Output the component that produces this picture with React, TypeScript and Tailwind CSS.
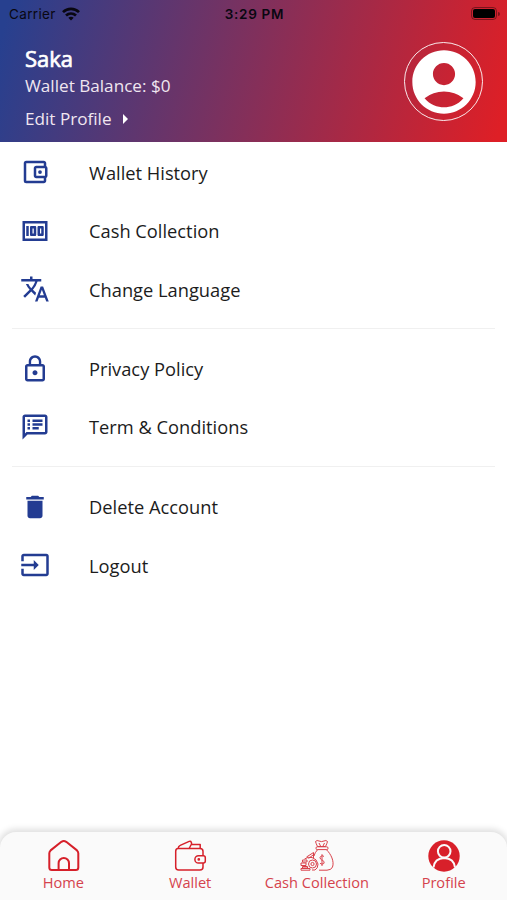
import {
  MdAccountCircle,
  MdArrowRight,
  MdDelete,
  MdInput,
  MdLockOutline,
  MdMoney,
  MdOutlineAccountBalanceWallet,
  MdOutlineSpeakerNotes,
  MdTranslate,
} from "react-icons/md";

const sections = [
  [
    { icon: MdOutlineAccountBalanceWallet, label: "Wallet History" },
    { icon: MdMoney, label: "Cash Collection" },
    { icon: MdTranslate, label: "Change Language" },
  ],
  [
    { icon: MdLockOutline, label: "Privacy Policy" },
    { icon: MdOutlineSpeakerNotes, label: "Term & Conditions" },
  ],
  [
    { icon: MdDelete, label: "Delete Account" },
    { icon: MdInput, label: "Logout" },
  ],
];

const HomeIcon = () => (
  <svg width="34" height="34" viewBox="0 0 34 34" fill="none" stroke="#d6202a" strokeWidth="2" strokeLinejoin="round">
    <path d="M3.3 14.2 Q3.3 12.6 4.6 11.4 L15.4 2.8 Q17.8 1.2 20.2 2.8 L31 11.4 Q32.3 12.6 32.3 14.2 V28.5 Q32.3 31 29.8 31 H5.8 Q3.3 31 3.3 28.5Z" />
    <path d="M12.6 31 V24.2 a5.2 5.2 0 0 1 10.4 0 V31" />
  </svg>
);

const WalletIcon = () => (
  <svg width="34" height="34" viewBox="0 0 34 34" fill="none" stroke="#d6202a" strokeWidth="1.5" strokeLinejoin="round">
    <path d="M30 17 V12.5 Q30 9.5 27 9.5 H5 Q2.7 9.5 2.7 12.5 V28 Q2.7 31 5.7 31 H27 Q30 31 30 28 V24" />
    <path d="M5.2 9.5 Q5.2 7.2 7.2 6.4 L16.2 2.4 Q17.7 1.8 18.3 3.2 L18.7 5.5 M16.2 9.5 L18.2 5.5 H27.2 V9.5" />
    <path d="M30.3 16.8 H25.5 a3.6 3.6 0 0 0 0 7.2 H30.3 Q32.3 24 32.3 22 V18.8 Q32.3 16.8 30.3 16.8Z" />
    <circle cx="25.8" cy="20.4" r=".6" />
  </svg>
);

const CashIcon = () => (
  <svg width="34" height="34" viewBox="0 0 34 34" fill="none" stroke="#d9414a" strokeWidth="1" strokeLinejoin="round">
    <path d="M17.5 7.5 Q16 4.5 15.5 2.5 Q17 .8 19 2 Q21.5 3.2 24 2 Q26 .8 27.5 2.5 Q27 4.5 25.5 7.5Z M19 4 L20.5 7 M24.5 4 L23 7" />
    <rect x="16" y="7.8" width="12" height="2.8" rx="1.2" />
    <path d="M17.5 10.8 Q14.8 13.5 14 17 M26.5 10.8 C31 15 34.5 22.5 32.5 28 Q31.5 31 27 31.2 H19" />
    <path d="M24 17.5 Q22.8 16.3 21.3 17 Q19.2 18.2 20.5 20 Q21.3 21 22.8 21.5 Q25 22.5 23.8 24.5 Q22 26 20 24.3 M22 15.2 V27" />
    <path d="M6.5 18 L13.5 13.5 V19 M8.5 19.5 L13 16 M4.5 20 Q8 17.5 12 18.5 Q17 20 18 25 Q18 29.5 15 31 H12" />
    <circle cx="12.5" cy="25" r="4" />
    <circle cx="12.5" cy="25" r="1.6" />
    <path d="M2.5 21 H7 V23 H2.5Z M1 24 H6 V26.5 H1Z M2.5 27.5 H7.5 V29 H2.5Z M1 29.5 H10 V31.2 H1Z" />
  </svg>
);

const ProfileIcon = () => (
  <svg width="34" height="34" viewBox="0 0 34 34" fill="none">
    <circle cx="17" cy="17" r="15.7" fill="#d8202a" />
    <g stroke="#fafafa" strokeWidth="2">
      <circle cx="17.2" cy="12.3" r="6.3" />
      <path d="M6.5 28.5 Q7.5 19.3 17.2 19 Q27 19.3 28 28.5" />
    </g>
  </svg>
);

const tabs = [
  { icon: HomeIcon, label: "Home" },
  { icon: WalletIcon, label: "Wallet" },
  { icon: CashIcon, label: "Cash Collection" },
  { icon: ProfileIcon, label: "Profile" },
];

function StatusBar() {
  return (
    <div className="grid h-[27px] grid-cols-3 items-center pl-[9px] pr-[7px] font-['Inter',sans-serif] text-[13.5px] text-[#090711]">
      <div className="flex items-center gap-[6px]">
        <span className="pt-px tracking-[0.35px]">Carrier</span>
        <svg width="18" height="14" viewBox="0 0 18 14" fill="none" stroke="#090711" strokeWidth="2.7">
          <path d="M1 5.1 C5.5 .7 12.5 .7 17 5.1" />
          <path d="M4 8.6 C7 5.8 11 5.8 14 8.6" />
          <path d="M9 13.5 L6.3 10.8 Q9 8.7 11.7 10.8Z" fill="#090711" stroke="none" />
        </svg>
      </div>
      <span className="whitespace-nowrap pt-px text-center font-semibold tracking-[0.7px]">3:29 PM</span>
      <div className="flex items-center justify-end gap-px">
        <span className="h-[13px] w-[26px] rounded-[4px] border border-black/40 p-px">
          <span className="block h-full rounded-[2px] bg-black" />
        </span>
        <span className="h-1 w-[2px] rounded-r bg-black/40" />
      </div>
    </div>
  );
}

export default function App() {
  return (
    <div className="flex h-[900px] w-full flex-col overflow-hidden bg-white font-['Open_Sans',sans-serif]">
      {/* Header */}
      <header className="h-[142px] shrink-0 bg-[linear-gradient(105deg,#27408f_2%,#de1f26_98%)]">
        <StatusBar />
        <div className="flex justify-between pl-[25px] pr-6">
          <div className="pt-[18px] text-[#f0e6f0]">
            <h1 className="-mt-px mb-px text-[22px] leading-7 text-white [-webkit-text-stroke:0.7px_white]">Saka</h1>
            <p className="text-[17.15px] leading-[26px]">Wallet Balance: $0</p>
            <div className="mt-[7px] flex items-center text-[17.15px] leading-[26px]">
              Edit Profile
              <MdArrowRight className="ml-px size-6 text-white" />
            </div>
          </div>
          <div className="mt-[15px] flex size-[79px] items-center justify-center rounded-full border border-white/90 text-white">
            <MdAccountCircle className="size-[76px] shrink-0" />
          </div>
        </div>
      </header>

      {/* Menu */}
      <main className="flex-1 px-3">
        {sections.map((items, i) => (
          <section key={i} className={i === 0 ? "pt-px" : "border-t border-[#f0f0f0] pt-[10px]"}>
            <ul className={i === 0 ? "pb-[9.5px]" : "pb-[10px]"}>
              {items.map((item) => (
                <li key={item.label} className="flex h-[58.6px] items-center pl-2 text-[18.3px] text-[#1c1c1c]">
                  <item.icon className="mr-[39px] size-[30px] text-[#233c92]" />
                  {item.label}
                </li>
              ))}
            </ul>
          </section>
        ))}
      </main>

      {/* Bottom tabs */}
      <nav className="grid h-[68px] shrink-0 grid-cols-4 rounded-t-[16px] bg-[#fafafa] shadow-[0_-1px_6px_2px_rgba(0,0,0,0.13)]">
        {tabs.map((tab) => (
          <div key={tab.label} className="flex flex-col items-center pt-[7px] text-[14.6px] leading-[18px] text-[#d5434d]">
            <tab.icon />
            <span className="whitespace-nowrap">{tab.label}</span>
          </div>
        ))}
      </nav>
    </div>
  );
}
